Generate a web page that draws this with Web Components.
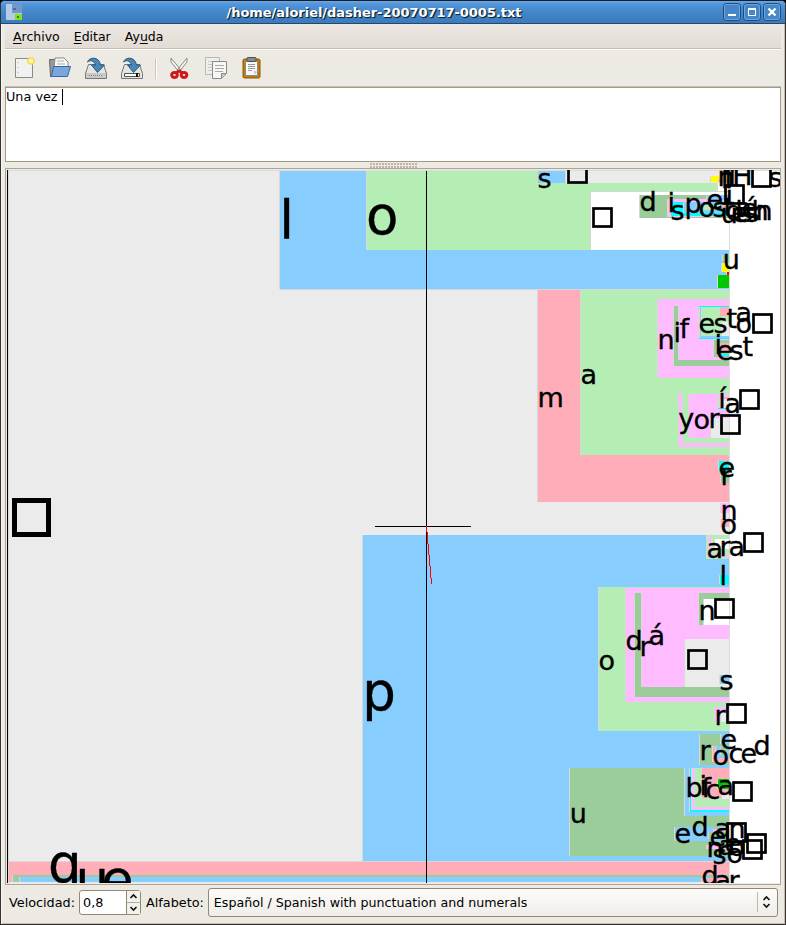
<!DOCTYPE html>
<html lang="es"><head><meta charset="utf-8"><title>Dasher</title>
<style>html,body{margin:0;width:786px;height:925px;overflow:hidden;background:#000}body{font:13px "DejaVu Sans",sans-serif;color:#000}</style></head>
<body>
<app-window>
 <title-bar slot="title">/home/aloriel/dasher-20070717-0005.txt</title-bar>
 <menu-bar></menu-bar>
 <tool-bar></tool-bar>
 <text-editor>Una vez </text-editor>
 <pane-grip></pane-grip>
 <dasher-canvas></dasher-canvas>
 <status-bar></status-bar>
</app-window>
<script>
const define=(name,html,init)=>customElements.define(name,class extends HTMLElement{
  constructor(){super();this.attachShadow({mode:'open'}).innerHTML=html;if(init)init(this.shadowRoot)}
});
define('app-window',`<style>
:host{display:flex;flex-direction:column;box-sizing:border-box;width:786px;height:925px;border:1px solid #35312e;border-top-color:#1b1b22;background:#ede9e3;border-radius:5px 5px 0 0;overflow:hidden}
.body{flex:1;display:flex;flex-direction:column;padding:0 4px 0 4px;min-height:0;box-shadow:inset 1px 0 #f8f6f2,inset -1px -1px #c8bcb0}
</style><slot name="title"></slot><div class="body"><slot></slot></div>`);
define('title-bar',`<style>
:host{display:flex;height:23px;box-sizing:border-box;align-items:center;background:linear-gradient(#6ba9e6 0,#5195dc 3px,#4285c8 12px,#3d7cbc 21px);border-bottom:1px solid #23496f;padding:0 4px 0 5px;color:#fff;font-weight:bold;font-size:13px;text-shadow:1px 1px 1px #123,1px 1px #234}
.t{flex:1;text-align:center;padding-left:3px;letter-spacing:-.04px;white-space:nowrap}
.b{display:flex;gap:2px}svg{display:block}
</style>
<svg width="16" height="16" shape-rendering="crispEdges"><path fill="#b6cce5" d="M0 0h16v16H0z"/><path fill="#7298cb" d="M6 0h10v9H6z"/><path fill="#4e6d9b" d="M7 4h3v2H7z"/><path fill="#7fdf20" d="M9 10h7v6H9z"/><path fill="#37800d" d="M11 12h2v2h-2z"/></svg>
<div class="t"><slot></slot></div>
<div class="b">
<svg width="18" height="18"><rect x=".5" y=".5" width="17" height="17" rx="3" fill="#4486c9" stroke="#214b76"/><rect x="1.5" y="1.5" width="15" height="15" rx="2" fill="none" stroke="#6ba6e0"/><path fill="#fff" d="M5 11h8v2H5z"/></svg>
<svg width="18" height="18"><rect x=".5" y=".5" width="17" height="17" rx="3" fill="#4486c9" stroke="#214b76"/><rect x="1.5" y="1.5" width="15" height="15" rx="2" fill="none" stroke="#6ba6e0"/><path fill="#fff" fill-rule="evenodd" d="M5 5h8v8H5zM6 7v5h6V7z"/></svg>
<svg width="18" height="18"><rect x=".5" y=".5" width="17" height="17" rx="3" fill="#4486c9" stroke="#214b76"/><rect x="1.5" y="1.5" width="15" height="15" rx="2" fill="none" stroke="#6ba6e0"/><path stroke="#fff" stroke-width="2.4" d="M5.500 5.500l7 7M12.500 5.500l-7 7"/></svg>
</div>`);
define('menu-bar',`<style>
:host{display:flex;height:25px;box-sizing:border-box;background:linear-gradient(#ede8e3,#e2dcd5);border-bottom:1px solid #c8bcae;padding:0 8px;gap:14px;align-items:center;font-size:12.500px}
span{white-space:nowrap}u{text-underline-offset:2px;text-decoration-thickness:1px}
</style><span><u>A</u>rchivo</span><span><u>E</u>ditar</span><span>Ay<u>u</u>da</span>`);
define('tool-bar',`<style>
:host{display:flex;height:38px;box-sizing:border-box;border-top:1px solid #fff;border-bottom:1px solid #cbbfb1;padding:0 7px;align-items:center;gap:12px}
svg{display:block;width:24px;height:24px}i{width:1px;height:21px;background:#cdc5ba;border-right:1px solid #fff;margin:0 -2px 0 -1px}
</style>
<svg><path fill="#f1f1f1" stroke="#888a85" d="M3.500 2.500h17v19h-17z"/><path stroke="#aaa" stroke-dasharray="1 4" d="M6 6v14"/><circle cx="19" cy="5" r="3" fill="#fff8a0" stroke="#f2dc55" stroke-width="1.500"/></svg>
<svg><path fill="#999" stroke="#666" d="M2.500 20.500l-1-17h7l2 2h9v9z"/><path fill="#fafafa" stroke="#888" d="M6 13l1-11h9l4 4v7z"/><path stroke="#aaa" d="M9 5h7M9 8h8"/><path fill="#78a7dc" stroke="#3465a4" d="M5.500 10.500h17l-3 10h-17c2-2 2-6 3-10z"/></svg>
<svg><path fill="#e5e5e2" stroke="#777" d="M4.500 8.500h15l3 9v5h-21v-5z"/><path fill="#c9c9c7" d="M2 17h20v5H2z"/><path stroke="#888" stroke-dasharray="1 1" d="M5 19.500h14"/><path fill="#4a86b8" stroke="#255a83" d="M3.500 6C5 1 15 0 16.500 9h4l-7 7.500-6-7.500h4C10 4 6 4 3.500 6z"/></svg>
<svg><path fill="#e5e5e2" stroke="#777" d="M4.500 8.500h15l3 9v5h-21v-5z"/><path fill="#fff" stroke="#555" d="M4.500 17.500h15v3h-15z"/><path fill="#111" d="M16 17h2v4h-2z"/><path fill="#4a86b8" stroke="#255a83" d="M3.500 6C5 1 15 0 16.500 9h4l-7 7.500-6-7.500h4C10 4 6 4 3.500 6z"/></svg>
<i></i>
<svg><path fill="#f2f2f0" stroke="#8a8c87" d="M4 2l10 12-2 2L4 6zM20 2L10 14l2 2 8-10z"/><g fill="none" stroke="#d01818" stroke-width="3"><ellipse cx="7.500" cy="19" rx="2.800" ry="2.600"/><ellipse cx="17" cy="19" rx="2.800" ry="2.600"/><path d="M9.500 16.500l2.700-1.500 2.800 1.500"/></g></svg>
<svg><path fill="#eee" stroke="#b8b8b5" d="M2.500 1.500h14v17h-14z"/><path stroke="#c8c8c5" d="M5 5.500h9M5 8.500h9M5 11.500h5M5 14.500h5"/><path fill="#f7f7f7" stroke="#888a85" d="M9.500 5.500h14v12l-5 5h-9z"/><path stroke="#aaa" d="M12 9.500h9M12 12.500h9M12 15.500h8"/><path fill="#ccc" stroke="#888" d="M18.500 22v-4.500H23"/></svg>
<svg><rect x="4" y="3" width="17" height="19" rx="1.500" fill="#c17d11" stroke="#8f5902"/><path fill="#f8f8f6" stroke="#888" d="M6.500 5.500h12v14h-12z"/><rect x="8" y="1.500" width="9" height="4" rx="1" fill="#888a85" stroke="#50524e"/><path stroke="#999" d="M9 8.500h7M9 10.500h7M9 12.500h7M9 14.500h4"/><path fill="#ccc" d="M15 19v-4h4z"/></svg>`);
define('text-editor',`<style>
:host{display:flex;height:75px;box-sizing:border-box;border:1px solid #a39785;background:#fff;align-items:flex-start;font-size:12.800px;line-height:17px;white-space:pre}
b{width:1px;height:16px;background:#000;margin-top:1px}
</style><span><slot></slot></span><b></b>`);
define('pane-grip',`<style>
:host{display:flex;height:6px;justify-content:center;align-items:center}
i{width:47px;height:5px;background:radial-gradient(circle at 1px 1px,#bdb4a8 .7px,transparent 1px) 0 0/3px 3px}
</style><i></i>`);
define('status-bar',`<style>
:host{display:flex;flex:1;align-items:center;padding:0 3px 5px 4px;font-size:12.800px;white-space:nowrap}
.spin{display:flex;width:62px;height:25px;box-sizing:border-box;border:1px solid #938873;border-radius:3px;background:#fff;margin:0 5px 0 4px;line-height:23px}
.n{flex:1;padding-left:3px}
.a{width:13px;background:#f3f1ec;border-left:1px solid #938873}
.combo{flex:1;height:29px;box-sizing:border-box;display:flex;align-items:center;border:1px solid #938873;border-radius:3px;background:linear-gradient(#fdfcfb,#efede8);padding:0 5px;margin-left:4px;font-size:12.650px}
.combo span{flex:1}.combo svg{border-left:1px solid #c1b8aa}svg{display:block;fill:none;stroke:#111}
</style><span>Velocidad:</span><div class="spin"><span class="n">0,8</span><div class="a"><svg width="13" height="23"><path d="M0 11.500h13" stroke="#b8ae9e"/><path stroke-width="1.600" d="M3.500 7l3-3 3 3M3.500 16l3 3 3-3"/></svg></div></div>
<span>Alfabeto:</span><div class="combo"><span>Español / Spanish with punctuation and numerals</span><svg width="14" height="20"><path stroke-width="1.600" d="M5.500 8l3-3 3 3M5.500 12l3 3 3-3"/></svg></div>`);

const B='#87ceff',G='#b4eeb4',D='#9bcd9b',P='#ffaeb9',L='#ffbbff',C='#00ffff',E='#ebebeb',W='#ffffff',Y='#ffff00',K='#00c800';
// Each block: colour, left, top, right, bottom
const blocks=[
[E,9,171,729,883],
[B,280,171,729,289],[G,367,171,729,250],[B,538,171,565,183],[E,566,171,729,183],[W,718,183,729,192],[W,591,192,729,250],
[Y,711,176,719,182],[P,719,179,729,182],[Y,724,176,729,180],
[D,640,195,729,218],[L,668,199,729,217],[C,671,202,729,216],[B,684,202,729,213],[B,707,195,729,200],[G,702,205,729,210],[P,722,206,729,208],
[D,723,255,729,261],[Y,722,263,729,272],['#f00',727,272,729,275],[K,718,275,729,288],
[P,538,290,729,502],[G,581,290,729,455],[L,658,299,729,378],[D,674,306,729,366],[L,679,306,729,360],[C,699,306,729,339],[B,700,307,729,338],[G,702,307,729,336],[P,720,307,729,316],[E,722,322,729,336],[D,714,340,729,357],[P,719,343,729,352],[C,721,354,729,356],
[L,679,393,729,447],[G,683,393,729,443],[L,689,394,729,438],[E,711,418,729,438],[G,718,397,729,409],[P,720,397,729,399],[E,720,399,729,408],[C,718,408,729,409],
[C,719,461,729,471],[D,721,471,729,483],[L,721,503,729,513],[P,721,519,729,527],
[B,363,535,729,861],[G,707,535,729,559],[L,709,536,729,557],[G,712,536,729,554],[W,715,539,729,549],[C,720,575,729,584],
[G,599,587,729,731],[L,626,588,729,702],[D,635,593,729,697],[L,642,593,729,687],[D,699,593,729,625],[W,704,599,729,625],[E,685,639,729,687],[B,720,675,729,684],[L,715,707,729,722],[E,721,712,729,722],
[D,700,734,729,765],[B,721,734,729,744],[P,713,746,729,762],[B,716,746,729,758],[D,721,747,727,755],
[D,570,768,729,856],[B,685,768,729,816],[C,690,768,729,812],[L,692,768,729,810],[G,695,768,729,807],[P,702,768,729,798],[K,718,779,729,789],[E,722,795,729,799],
[B,675,827,729,841],[P,714,829,729,835],[D,709,832,729,839],[L,707,845,729,849],
[P,9,862,729,883],[D,13,875,729,883],[B,20,877,729,882],[P,702,878,729,882],[E,9,882,729,883]
];
// Each letter: character, left ink edge, baseline
const letters=[
['s',539,188],['d',641,211],['i',670,212],['s',672,220],['p',687,213],['o',700,217],['e',708,209],['s',714,217],
['u',723,223],['t',724,217],['e',733,222],['s',747,222],['é',743,218],['n',758,220],['a',737,217],['h',754,220],['d',727,220],['s',740,222],['i',728,205],
['n',720,186],['f',721,188],['i',731,185],['H',735,185],['l',727,188],['s',770,187],
['u',725,269],
['m',540,407],['a',582,384],['n',660,349],['i',676,342],['f',680,338],['e',700,333],['s',715,333],['t',727,328],['a',737,322],['o',737,333],['i',717,354],['e',718,360],['s',731,360],['t',743,356],
['í',719,408],['a',726,413],['y',679,428],['o',695,429],['r',711,428],['e',720,477],['r',723,485],
['n',723,520],['o',722,534],['a',708,558],['r',722,556],['a',730,556],['l',722,585],['n',701,620],
['á',650,645],['d',627,650],['r',642,656],['o',600,670],['s',721,690],['r',717,725],
['r',702,760],['o',714,765],['c',730,763],['e',742,763],['d',755,755],['e',722,749],
['b',688,797],['i',702,795],['f',702,797],['c',707,799],['a',719,795],['u',572,823],
['e',676,843],['d',693,836],['a',716,838],['e',711,846],['n',731,838],['n',709,857],['s',714,864],['o',728,863],['a',720,855],['o',730,856],['e',726,853],
['d',703,885],['a',716,890],['r',731,890]
];
const big=[['l',284,239],['o',369,234],['p',367,710],['q',51,882],['u',80,898],['e',104,898]];
const squares=[[567,163],[592,207],[751,167],[724,184],[752,313],[739,389],[720,414],[743,532],[714,598],[687,649],[726,703],[732,781],[726,822],[746,833],[742,839]];
const bearing={m:.09,n:.09,i:.09,í:.03,l:.09,r:.09,p:.09,b:.09,h:.09,u:.085,H:.1,t:.02,f:.02,y:.03};
const glyph=(size)=>([c,x,y])=>`<text font-size="${size}" x="${x-size*(bearing[c]??.055)}" y="${y}">${c}</text>`;
define('dasher-canvas',`<style>
:host{display:block;height:717px;box-sizing:border-box;border:1px solid #b0a494;padding:1px 0 0 1px}
svg{display:block;width:773px;height:713px;background:#fff;font-family:"DejaVu Sans",sans-serif}
text{stroke:#000;stroke-width:.35px}
</style><svg viewBox="7 170 773 713">
<g shape-rendering="crispEdges"><path d="M7 170h1v713h-1z"/><path fill="#dcdcdc" d="M8 170h772v1H8zM729 171h1v712h-1z"/>
${blocks.map(([c,x,y,r,b])=>`<rect fill="#d8d8d8" x="${x-1}" y="${y}" width="1" height="${b-y}"/><rect fill="${c}" x="${x}" y="${y}" width="${r-x}" height="${b-y}"/>`).join('')}
<path fill="#d8d8d8" d="M280 289h449v1H280zM591 191h138v1H591zM9 861h720v1H9z"/></g>
${letters.map(glyph(27)).join('')}${big.map(glyph(53)).join('')}
<g fill="none" stroke="#000">${squares.map(([x,y])=>`<rect x="${x+1.5}" y="${y+1.5}" width="18" height="18" stroke-width="2.700"/>`).join('')}<rect x="14.500" y="500.500" width="34" height="34" stroke-width="5"/></g>
<g shape-rendering="crispEdges"><path d="M426 171h1v712h-1zM375 526h96v1h-96z"/><path fill="#f00" d="M426 526h1v6h-1zM427 532h1v12h-1zM428 544h1v11h-1zM429 555h1v11h-1zM430 566h1v12h-1zM431 578h1v6h-1z"/></g>
</svg>`);
</script></body></html>
